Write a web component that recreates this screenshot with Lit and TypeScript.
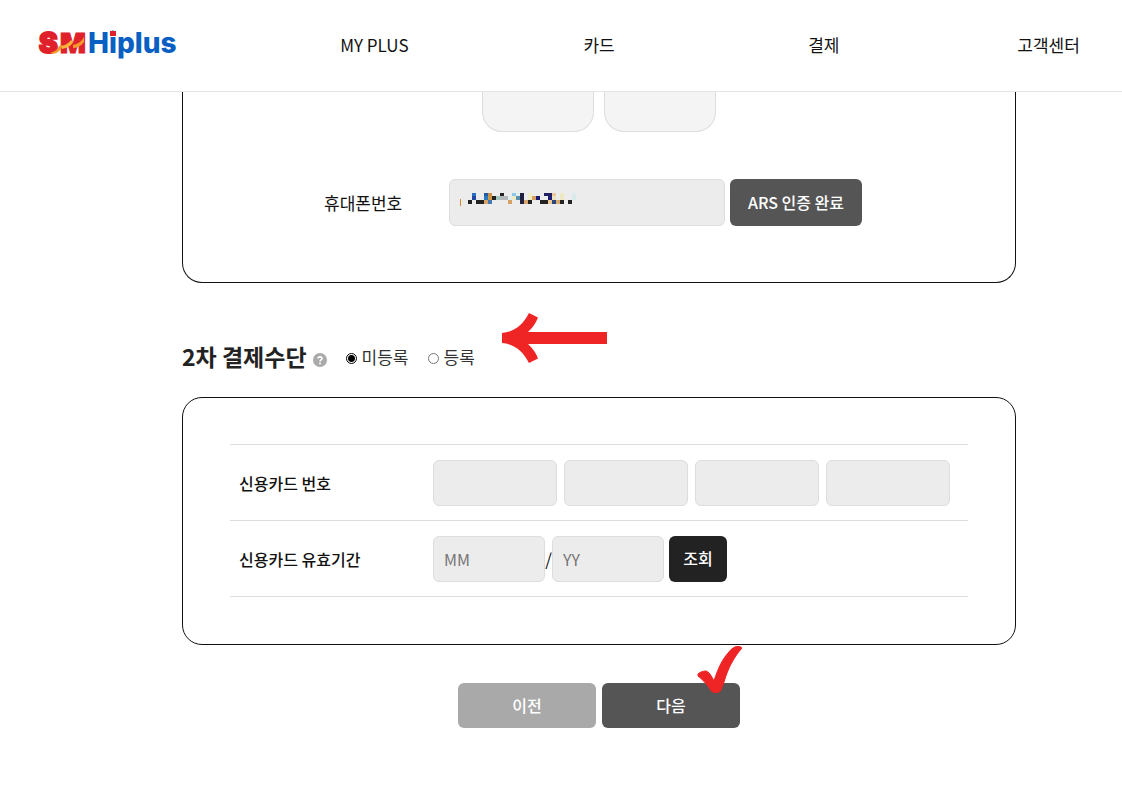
import { LitElement, html, svg, css } from "lit";
import { customElement, state } from "lit/decorators.js";

const MENU = ["MY PLUS", "카드", "결제", "고객센터"];

/* Masked phone number: [column, row, columns wide, colour] on a coarse grid. */
const MASK: [number, number, number, string][] = [
  [1, 0, 1, "#2a70c0"], [4, 0, 1, "#235ca6"], [5, 0, 1, "#c8904a"], [8, 0, 1, "#222222"],
  [11, 0, 1, "#8cc8ec"], [12, 0, 1, "#e2eef0"], [13, 0, 1, "#222040"], [15, 0, 1, "#f0ecc8"],
  [19, 0, 2, "#1e2060"], [21, 0, 1, "#ecc898"], [23, 0, 1, "#ede8c0"], [26, 0, 1, "#dcecec"],
  [1, 1, 1, "#2048a0"], [4, 1, 1, "#2878c0"], [5, 1, 1, "#d09848"], [6, 1, 1, "#222222"],
  [7, 1, 1, "#a0c8c0"], [8, 1, 2, "#b4b8b8"], [10, 1, 1, "#e2eeee"], [11, 1, 1, "#eeeac4"],
  [12, 1, 1, "#5890b0"], [13, 1, 1, "#222040"], [15, 1, 1, "#f0ecc8"], [16, 1, 1, "#d8a060"],
  [17, 1, 1, "#181878"], [20, 1, 1, "#1e1c78"], [21, 1, 1, "#ece4b8"], [23, 1, 1, "#ede8c0"],
  [26, 1, 1, "#d6ecec"],
  [0, 2, 1, "#222222"], [2, 2, 2, "#222222"], [4, 2, 1, "#d8a468"], [5, 2, 1, "#4078b8"],
  [10, 2, 1, "#d8a060"], [13, 2, 1, "#222040"], [14, 2, 1, "#d8a870"], [15, 2, 1, "#222222"],
  [18, 2, 2, "#222222"], [20, 2, 1, "#f0c898"], [21, 2, 1, "#284880"], [22, 2, 1, "#d8a870"],
  [23, 2, 1, "#222222"], [25, 2, 1, "#222222"],
];

@customElement("app-root")
export class AppRoot extends LitElement {
  @state() private second = "none";

  static styles = css`
    :host {
      display: block;
      overflow: hidden;
      background: #fff;
      color: #111;
      font: 400 17px/24px "Noto Sans CJK KR", "Noto Sans", sans-serif;
    }
    * { box-sizing: border-box; }
    .page { min-width: 1198px; padding-bottom: 68px; }
    header {
      display: flex;
      align-items: center;
      height: 92px;
      padding: 0 37px 0 29px;
      border-bottom: 1px solid #e5e5e5;
    }
    .logo { display: block; width: 233px; }
    .logo svg { display: block; }
    nav { flex: 1; display: grid; grid-template-columns: repeat(4, 1fr); padding-bottom: 2px; text-align: center; }
    nav a { color: #111; text-decoration: none; }
    main { width: 834px; margin: 0 auto; }
    .panel { border: 1px solid #111; border-radius: 20px; }
    .panel.cut { border-top: 0; border-radius: 0 0 20px 20px; padding-bottom: 56px; }
    .tiles { display: flex; justify-content: center; gap: 10px; }
    .tile {
      width: 112px;
      height: 40px;
      border: 1px solid #ddd;
      border-top: 0;
      border-radius: 0 0 20px 20px;
      background: #f4f4f4;
    }
    .phone { display: flex; align-items: center; margin-top: 47px; padding-left: 141px; }
    .phone label { width: 125px; }
    .phone .box, .phone button { height: 47px; }
    .field { position: relative; width: 276px; margin-right: 5px; }
    .field svg { position: absolute; left: 11px; top: 14px; }
    input.box {
      display: block;
      width: 100%;
      height: 46px;
      padding: 0 10px;
      border: 1px solid #ddd;
      border-radius: 6px;
      background: #ececec;
      font: inherit;
      font-size: 16px;
      color: #222;
    }
    input.box::placeholder { color: #757575; opacity: 1; }
    button {
      height: 46px;
      padding: 0 0 2px;
      border: 0;
      border-radius: 6px;
      color: #fff;
      background: #555;
      font: inherit;
      font-size: 16px;
      font-weight: 500;
    }
    .phone button { width: 132px; }
    .title { position: relative; display: flex; align-items: center; height: 114px; padding-top: 34px; }
    h2 { margin: 0 6px 0 0; padding-bottom: 2px; font-size: 23px; line-height: 36px; font-weight: 700; color: #222; }
    .help { display: block; margin-top: 6px; }
    .choice { display: flex; align-items: center; color: #333; margin-left: 19px; }
    .choice input {
      appearance: none;
      width: 11px;
      height: 11px;
      margin: 2px 5px 0 0;
      border: 1px solid #767676;
      border-radius: 50%;
      background: #fff;
    }
    .choice input:checked { border-color: #000; background: radial-gradient(#000 0 3px, #fff 4px); }
    .arrow { position: absolute; left: 320px; top: 30px; }
    .card { padding: 46px 47px 47px; }
    table { width: 100%; border-collapse: separate; border-spacing: 0; border-top: 1px solid #ddd; }
    th, td { border-bottom: 1px solid #ddd; height: 76px; padding: 0; }
    th { width: 203px; padding-left: 9px; text-align: left; font-size: 16px; font-weight: 500; }
    .numbers { display: grid; grid-template-columns: repeat(4, 124px); gap: 7px; }
    .expiry { display: flex; align-items: center; }
    .expiry .box { width: 112px; }
    .expiry span { width: 7px; text-align: center; }
    .lookup { width: 58px; margin-left: 5px; background: #222; }
    .actions { display: flex; justify-content: center; gap: 6px; margin-top: 38px; }
    .actions button { display: block; width: 138px; height: 45px; }
    .actions .prev { background: #a9a9a9; }
    .actions .next { position: relative; }
    .check { position: absolute; right: -2px; top: -37px; }
  `;

  private pick(e: Event) {
    this.second = (e.target as HTMLInputElement).value;
  }

  render() {
    const locked = this.second === "none";
    return html`
      <div class="page">
        <header>
          <a class="logo" href="#" aria-label="SM Hiplus">
            <svg width="164" height="48" viewBox="-8 -9 164 48" font-family="Inter, sans-serif" font-weight="900" font-size="28">
              <text x="2" y="22" fill="#e0202a" stroke="#e0202a" stroke-width="2">S</text>
              <text x="23" y="22" font-size="27" fill="#e0202a" stroke="#e0202a">M</text>
              <path d="M13 22c6-2 8-4 9-7l4-1c-2 5-5 8-10 9z" fill="#f49a2c" />
              <path d="M25 15c4-1 7-3 9-6l2 2c-2 4-6 6-11 7z" fill="#f9b53a" />
              <path d="M36 14c5-1 8-3 11-8v5c-3 4-7 6-11 6z" fill="#f49a2c" />
              <text x="51" y="22" font-weight="800" fill="#0a5fc2">Hiplus</text>
              <rect x="73" y="0" width="6" height="5" fill="#e0202a" />
            </svg>
          </a>
          <nav>${MENU.map((m) => html`<a href="#">${m}</a>`)}</nav>
        </header>
        <main>
          <section class="panel cut">
            <div class="tiles"><div class="tile"></div><div class="tile"></div></div>
            <div class="phone">
              <label for="phone">휴대폰번호</label>
              <div class="field">
                <input class="box" id="phone" type="tel" readonly />
                <svg width="116" height="18" shape-rendering="crispEdges" aria-hidden="true">
                  <rect x="0" y="6" width="1" height="7" fill="#d08a28" />
                  ${MASK.map(([c, r, w, f]) => svg`<rect x=${8 + c * 4} y=${r === 0 ? 0 : r * 4 - 1} width=${w * 4} height=${r === 0 ? 3 : 4} fill=${f} />`)}
                </svg>
              </div>
              <button type="button">ARS 인증 완료</button>
            </div>
          </section>

          <div class="title">
            <h2>2차 결제수단</h2>
            <svg class="help" width="14" height="14" viewBox="0 0 14 14" role="img" aria-label="도움말">
              <circle cx="7" cy="7" r="7" fill="#aaa" />
              <path d="M5 5.600C5 3.300 9 3.300 9 5.500 9 6.800 7 6.800 7 8.400" fill="none" stroke="#fff" stroke-width="1.6" />
              <circle cx="7" cy="10.4" r="1" fill="#fff" />
            </svg>
            <label class="choice"><input type="radio" name="second" value="none" .checked=${locked} @change=${this.pick} />미등록</label>
            <label class="choice"><input type="radio" name="second" value="use" .checked=${!locked} @change=${this.pick} />등록</label>
            <svg class="arrow" width="106" height="50" viewBox="0 0 106 50" aria-hidden="true">
              <path d="M0 20C12 19 21 12 27 0l9 4.500c-2 5-5 10-10 14.500h79v12H26c5 5 8 9 10 14.500L27 50C21 38 12 31 0 30z" fill="#ee2524" />
            </svg>
          </div>

          <section class="panel card">
            <table>
              <tr>
                <th scope="row">신용카드 번호</th>
                <td>
                  <div class="numbers">
                    ${[1, 2, 3, 4].map((n) => html`<input class="box" inputmode="numeric" maxlength="4" aria-label="신용카드 번호 ${n}" ?readonly=${locked} />`)}
                  </div>
                </td>
              </tr>
              <tr>
                <th scope="row">신용카드 유효기간</th>
                <td>
                  <div class="expiry">
                    <input class="box" placeholder="MM" aria-label="유효기간 월" ?readonly=${locked} />
                    <span>/</span>
                    <input class="box" placeholder="YY" aria-label="유효기간 연도" ?readonly=${locked} />
                    <button class="lookup" type="button">조회</button>
                  </div>
                </td>
              </tr>
            </table>
          </section>

          <div class="actions">
            <button class="prev" type="button">이전</button>
            <button class="next" type="button">다음
              <svg class="check" width="45" height="48" viewBox="0 0 45 48" aria-hidden="true">
                <path d="M1 28c2-2 5-3 8-3 3 1 5 4 8 10C21 22 26 12 32 6c2-3 4-4 6-5 2-1 5-1 7 1-8 9-14 20-18 34l-3 8c-1 3-7 3-8 2-1 0-2-1-3-3C9 37 5 33 1 30z" fill="#ee2524" stroke="#ee2524" />
              </svg>
            </button>
          </div>
        </main>
      </div>
    `;
  }
}
